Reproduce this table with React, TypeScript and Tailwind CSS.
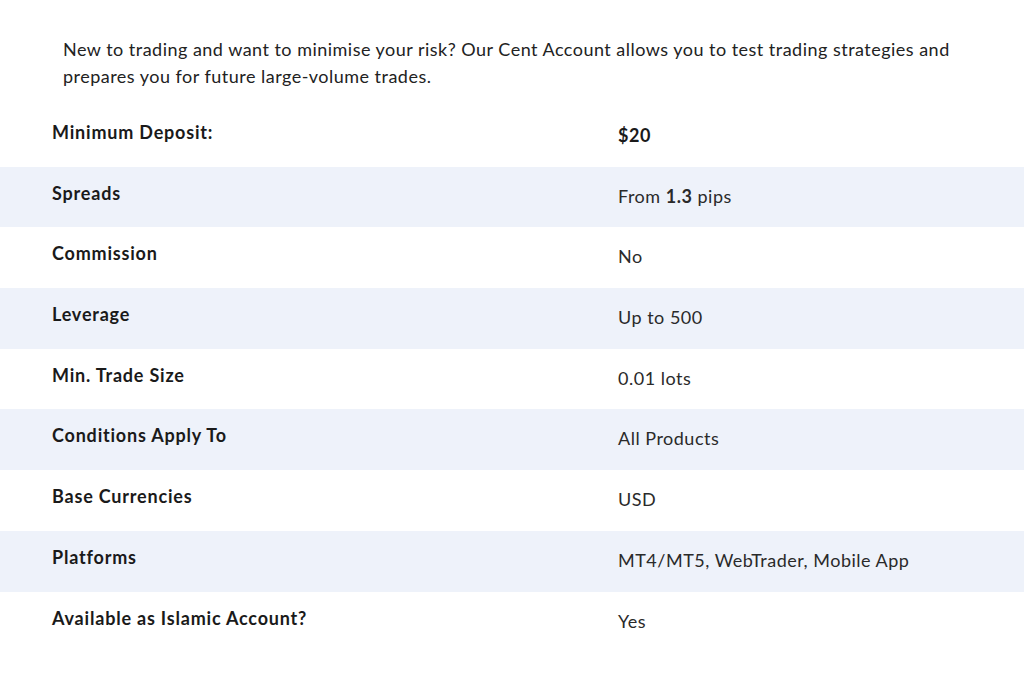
const rows: { label: string; value: React.ReactNode; bold?: boolean }[] = [
  { label: "Minimum Deposit:", value: "$20", bold: true },
  {
    label: "Spreads",
    value: (
      <>
        From <b className="font-bold">1.3</b> pips
      </>
    ),
  },
  { label: "Commission", value: "No" },
  { label: "Leverage", value: "Up to 500" },
  { label: "Min. Trade Size", value: "0.01 lots" },
  { label: "Conditions Apply To", value: "All Products" },
  { label: "Base Currencies", value: "USD" },
  { label: "Platforms", value: "MT4/MT5, WebTrader, Mobile App" },
  { label: "Available as Islamic Account?", value: "Yes" },
];

export default function App() {
  return (
    <div className="min-h-[674px] w-full bg-white font-['Lato',sans-serif] text-[#222]">
      <p className="px-[63px] pt-[36px] text-[18px] leading-[27px] tracking-[0.48px]">
        New to trading and want to minimise your risk? Our Cent Account allows you to test trading strategies and
        prepares you for future large-volume trades.
      </p>

      <div className="mt-[16px]">
        {rows.map((row, i) => (
          <div
            key={row.label}
            className={`grid h-[60.7px] grid-cols-[566px_1fr] pl-[52px] ${i % 2 === 1 ? "bg-[#eef2fa]" : "bg-white"}`}
          >
            <div className="pt-[14px] text-[18px] font-bold leading-[24px] tracking-[0.8px] text-[#1a1a1a]">
              {row.label}
            </div>
            <div
              className={`pt-[17px] text-[18px] leading-[24px] tracking-[0.5px] ${
                row.bold ? "font-bold text-[#1a1a1a]" : "text-[#2a2a2a]"
              }`}
            >
              {row.value}
            </div>
          </div>
        ))}
      </div>
    </div>
  );
}
